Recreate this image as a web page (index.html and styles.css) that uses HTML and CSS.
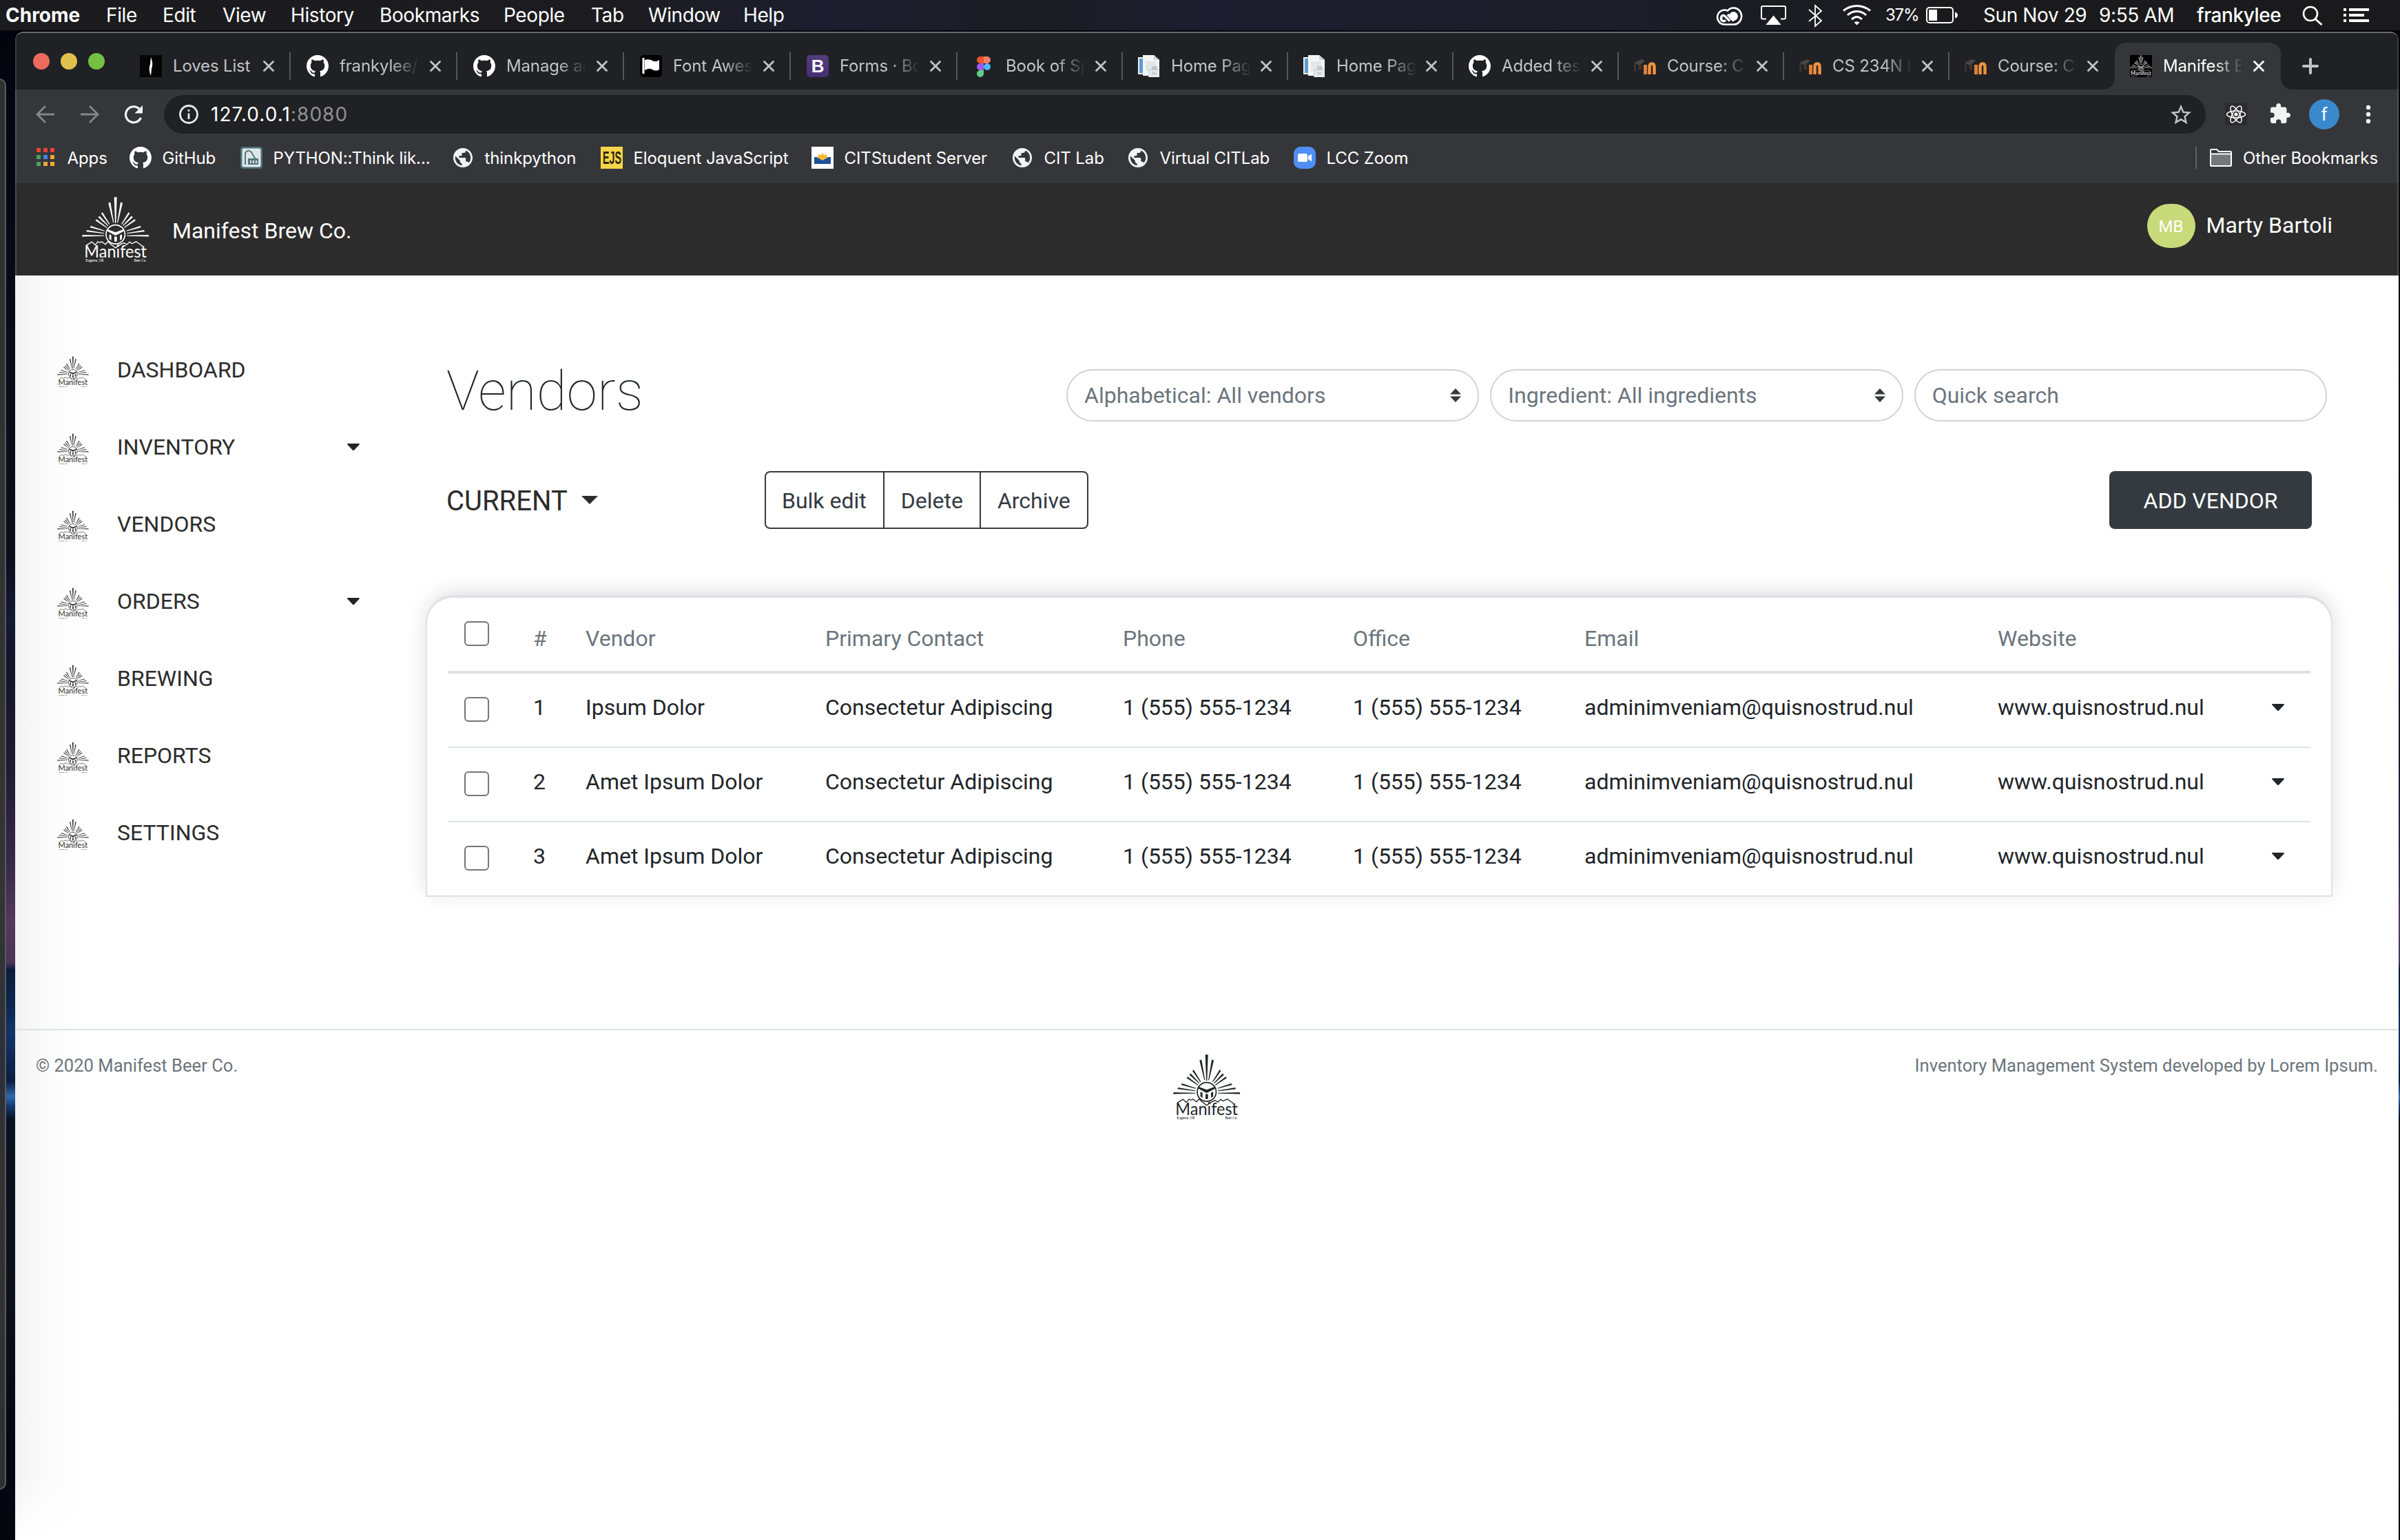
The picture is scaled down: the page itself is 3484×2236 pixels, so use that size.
FILE: index.html
```
<!DOCTYPE html>
<html lang="en">
<head>
<meta charset="utf-8">
<title>Manifest Brew Co.</title>
<link rel="stylesheet" href="styles.css">
</head>
<body>
<svg class="defs" aria-hidden="true">
  <symbol id="logo" viewBox="70 152 292 284">
    <g fill="currentColor">
      <path d="M209 152h12l-4 112h-4zM184 177l9-4 15 89-3 1zM246 177l-9-4-15 89 3 1zM153 222l6-5 31 51-3 2zM277 222l-6-5-31 51 3 2zM140 239l6-6 38 42-2 2zM290 239l-6-6-38 42 2 2zM128 253l5-6 46 36-2 2zM302 253l-5-6-46 36 2 2zM105 283l3-7 60 20-1 3zM325 283l-3-7-60 20 1 3zM89 301l2-7 75 13v3zM341 301l-2-7-75 13v3zM70 322l2-7 94 2v3zM360 322l-2-7-94 2v3z"/>
      <path d="M180 290l35 14 36-14v9l-36 19-35-19zM188 312l9 5v22l-9-6zM210 322h11v22h-11zM243 312l-9 5v22l9-6z"/>
    </g>
    <circle cx="215" cy="313" r="41" fill="none" stroke="currentColor" stroke-width="5"/>
    <path d="M89 360l24-15 14 14 12-15 8 5 8-5 16 12 12-12 12 12 20 15 24-16 13-5 12 7 12-12 10 8 18-9 26 18v6" fill="none" stroke="currentColor" stroke-width="4"/>
    <text x="80" y="413" textLength="270" lengthAdjust="spacingAndGlyphs" class="logo-name">Manifest</text>
    <text x="86" y="431" textLength="78" lengthAdjust="spacingAndGlyphs" class="logo-sub">Eugene, OR</text>
    <text x="295" y="431" textLength="53" lengthAdjust="spacingAndGlyphs" class="logo-sub">Beer Co.</text>
  </symbol>
  <symbol id="github" viewBox="0 0 16 16"><path fill="#fff" d="M8 0C3.58 0 0 3.58 0 8c0 3.54 2.29 6.53 5.47 7.59.4.07.55-.17.55-.38 0-.19-.01-.82-.01-1.49-2.01.37-2.53-.49-2.69-.94-.09-.23-.48-.94-.82-1.13-.28-.15-.68-.52-.01-.53.63-.01 1.08.58 1.23.82.72 1.21 1.87.87 2.33.66.07-.52.28-.87.51-1.07-1.78-.2-3.64-.89-3.64-3.95 0-.87.31-1.59.82-2.15-.08-.2-.36-1.02.08-2.12 0 0 .67-.21 2.2.82.64-.18 1.32-.27 2-.27.68 0 1.36.09 2 .27 1.53-1.04 2.2-.82 2.2-.82.44 1.1.16 1.92.08 2.12.51.56.82 1.27.82 2.15 0 3.07-1.87 3.75-3.65 3.95.29.25.54.73.54 1.48 0 1.07-.01 1.93-.01 2.2 0 .21.15.46.55.38A8.013 8.013 0 0016 8c0-4.42-3.58-8-8-8z"/></symbol>
  <symbol id="globe" viewBox="0.6 0.6 22.8 22.8"><path fill="#f1f3f4" d="M12 2C6.48 2 2 6.48 2 12s4.48 10 10 10 10-4.48 10-10S17.52 2 12 2zm-1 17.93c-3.95-.49-7-3.85-7-7.93 0-.62.08-1.21.21-1.79L9 15v1c0 1.1.9 2 2 2v1.93zm6.9-2.54c-.26-.81-1-1.39-1.9-1.39h-1v-3c0-.55-.45-1-1-1H8v-2h2c.55 0 1-.45 1-1V7h2c1.1 0 2-.9 2-2v-.41c2.93 1.19 5 4.06 5 7.41 0 2.08-.8 3.97-2.1 5.39z"/></symbol>
  <symbol id="close" viewBox="0 0 16 16"><path d="M1.5 1.5l13 13M14.500 1.500l-13 13" fill="none" stroke="currentColor" stroke-width="2.8" stroke-linecap="round"/></symbol>
  <symbol id="doc" viewBox="0 0 32 32"><path d="M0 3h8v25H0z" fill="#e8edf2"/><path d="M2 5h6v21H2z" fill="#5b9bd0"/><path d="M7 0h16l8 7v23H7z" fill="#f4f5f6"/><path d="M11 9h15v14H11z" fill="#e3e6e9"/><path d="M23 0v7h8z" fill="#cdd1d5"/><path d="M15 21h16v11H15z" fill="#e9ebee"/><path d="M15 21h16v1H15zM15 21h1v11h-1zM20 16h8v5h-8z" fill="#c3c8cd"/><path d="M20 24h7v5h-7z" fill="#d0d5da"/></symbol>
  <symbol id="moodle" viewBox="0 0 32 32"><path d="M0 11L11 6l5 2-8 7z" fill="#4b4643"/><path d="M1.500 12v12" stroke="#453c38" stroke-width="2"/><path d="M7 14h4v7H7z" fill="#47352b"/><path d="M16.500 28V14" stroke="#e07f38" stroke-width="5"/><path d="M22.500 28V17q0-4.500 3.500-4.500t3.500 4.500v11" fill="none" stroke="#f0913d" stroke-width="4.500"/></symbol>
  <symbol id="caret" viewBox="0 0 18 10"><path d="M1 0h16q1.500.3.500 1.700L10.200 9.400q-1.200 1-2.400 0L.5 1.700Q-.5.3 1 0z" fill="#212529"/></symbol>
  <symbol id="sort" viewBox="0 0 16 20"><path d="M0 8.500L8 0l8 8.500zM0 11.500L8 20l8-8.500z" fill="#343a40"/></symbol>
</svg>

<div class="desktop">
  <header class="menubar">
    <nav class="menus">
      <b>Chrome</b><span>File</span><span>Edit</span><span>View</span><span>History</span><span>Bookmarks</span><span>People</span><span>Tab</span><span>Window</span><span>Help</span>
    </nav>
    <div class="status">
      <svg width="40" height="44" fill="none" stroke="#fff"><path d="M14 35.500h13a11.500 12 0 1 0-9-20A10.500 10.500 0 1 0 14 35.500z" stroke-width="2.600"/><path d="M21 30.500l-7-7q-3-2.500-5 .5-1.500 4 1 6 2.500 1.500 5-.5" stroke-width="3.500"/><path d="M18 21l9 9.500" stroke-width="3.500"/><circle cx="26.500" cy="23.500" r="6.500" fill="#fff" stroke="none"/></svg>
      <svg width="40" height="44"><path d="M8 27.500H3q-2 0-2-2V11q0-2 2-2h31q2 0 2 2v14.500q0 2-2 2h-5" fill="none" stroke="#fff" stroke-width="2"/><path d="M18.500 22.500L29.500 36h-22z" fill="#fff"/></svg>
      <svg width="24" height="44"><path d="M2 14l18 16-9 8V8l9 8L2 31" fill="none" stroke="#fff" stroke-width="1.800"/></svg>
      <svg width="44" height="44" fill="none" stroke="#fff" stroke-width="3"><path d="M2 15.500Q11 8.500 21.500 8.500T41 15.500M8 22q6-5.500 13.500-5.500T35 22M14 28q4-3.500 7.500-3.500T29 28"/><path d="M17.500 32.500q4-2.500 8 0l-4 4z" fill="#fff" stroke="none"/></svg>
      <span class="percent">37%</span>
      <svg width="48" height="44"><rect x="1" y="11" width="38" height="22" rx="4" fill="none" stroke="#fff" stroke-width="2"/><path d="M4 14h12v16H4zM42 17.500q4 1 4 4.500t-4 4.500z" fill="#fff"/></svg>
      <span>Sun Nov 29</span><span>9:55 AM</span><span class="user">frankylee</span>
      <svg width="32" height="44" fill="none" stroke="#fff" stroke-width="2.600"><circle cx="12" cy="20" r="10"/><path d="M19 27.500l9.500 8.500" stroke-width="3"/></svg>
      <svg width="40" height="44" fill="#fff"><path d="M0 12h4v4H0zM8 12h29v4H8zM0 20h4v4H0zM8 20h22v4H8zM0 28h4v4H0zM8 28h29v4H8z"/></svg>
    </div>
  </header>

  <div class="stage">
    <div class="window-behind"></div>
    <div class="browser">
      <div class="tabstrip">
        <div class="lights"><i class="red"></i><i class="yellow"></i><i class="green"></i></div>
        <div class="tab wide"><svg viewBox="0 0 32 32"><path fill="#050505" d="M0 0h32v32H0z"/><path d="M16 3q4 9 1 17l-1 10q-4-9-1-17z" fill="#fff"/></svg><span>Loves List</span><svg class="x"><use href="#close"/></svg></div>
        <div class="tab wide"><svg><use href="#github"/></svg><span>frankylee/</span><svg class="x"><use href="#close"/></svg></div>
        <div class="tab wide"><svg><use href="#github"/></svg><span>Manage ac</span><svg class="x"><use href="#close"/></svg></div>
        <div class="tab wide"><svg viewBox="0 0 32 32"><rect width="32" height="32" rx="5" fill="#000"/><path d="M5 4v23" stroke="#fff" stroke-width="3"/><path d="M7 7q6-2 11 1t10-1v14q-5 3-10 0t-11 1z" fill="#fff"/></svg><span>Font Awes</span><svg class="x"><use href="#close"/></svg></div>
        <div class="tab wide"><span class="fav-b">B</span><span>Forms · Bo</span><svg class="x"><use href="#close"/></svg></div>
        <div class="tab"><svg viewBox="0 0 32 32"><path d="M16 2h-5a5 5 0 0 0 0 10h5z" fill="#e8572c"/><path d="M16 2h5a5 5 0 0 1 0 10h-5z" fill="#f37c6b"/><path d="M16 12h-5a5 5 0 0 0 0 10h5z" fill="#9b5cf6"/><circle cx="21" cy="17" r="5" fill="#4fb6f8"/><path d="M16 22h-5a5 5 0 1 0 5 5z" fill="#5fcf86"/></svg><span>Book of Sp</span><svg class="x"><use href="#close"/></svg></div>
        <div class="tab"><svg><use href="#doc"/></svg><span>Home Pag</span><svg class="x"><use href="#close"/></svg></div>
        <div class="tab"><svg><use href="#doc"/></svg><span>Home Pag</span><svg class="x"><use href="#close"/></svg></div>
        <div class="tab"><svg><use href="#github"/></svg><span>Added tes</span><svg class="x"><use href="#close"/></svg></div>
        <div class="tab"><svg><use href="#moodle"/></svg><span>Course: C</span><svg class="x"><use href="#close"/></svg></div>
        <div class="tab"><svg><use href="#moodle"/></svg><span>CS 234N I</span><svg class="x"><use href="#close"/></svg></div>
        <div class="tab before-active"><svg><use href="#moodle"/></svg><span>Course: C</span><svg class="x"><use href="#close"/></svg></div>
        <div class="tab active"><svg class="fav-logo"><use href="#logo"/></svg><span>Manifest B</span><svg class="x"><use href="#close"/></svg></div>
        <svg class="new-tab" viewBox="0 0 24 24"><path d="M12 2v20M2 12h20" stroke="#c1c2c6" stroke-width="4" stroke-linecap="round"/></svg>
      </div>

      <div class="toolbar">
        <svg class="nav" viewBox="0 0 28 28"><path d="M27 14H2M14 2L2 14l12 12" fill="none" stroke="#85868a" stroke-width="2.800"/></svg>
        <svg class="nav" viewBox="0 0 28 28"><path d="M1 14h25M14 2l12 12-12 12" fill="none" stroke="#85868a" stroke-width="2.800"/></svg>
        <svg class="nav" viewBox="0 0 28 28"><path d="M24.500 19A11.500 11.500 0 1 1 22 6" fill="none" stroke="#f1f3f4" stroke-width="3.200"/><path d="M27 1v11.500H15.500z" fill="#f1f3f4"/></svg>
        <div class="omnibox">
          <svg class="info" viewBox="0 0 28 28"><circle cx="14" cy="14" r="12.500" fill="none" stroke="#e8eaed" stroke-width="2.800"/><path d="M12.600 7h2.800v2.800h-2.800zM12.600 12.500h2.800V21h-2.800z" fill="#e8eaed"/></svg>
          <span class="url">127.0.0.1<em>:8080</em></span>
          <svg class="star" viewBox="1.500 1.500 21 20"><path fill="#c4c5c8" d="M22 9.240l-7.190-.62L12 2 9.190 8.630 2 9.240l5.460 4.730L5.820 21 12 17.270 18.180 21l-1.630-7.030L22 9.240zM12 15.400l-3.760 2.270 1-4.280-3.320-2.880 4.380-.38L12 6.100l1.710 4.040 4.380.38-3.320 2.880 1 4.280L12 15.400z"/></svg>
        </div>
        <svg class="react" viewBox="0 0 32 32"><rect width="32" height="32" rx="3" fill="#2b2b2e"/><circle cx="16" cy="16" r="2.600" fill="#fff"/><g fill="none" stroke="#fff" stroke-width="1.500"><ellipse cx="16" cy="16" rx="13.500" ry="5"/><ellipse cx="16" cy="16" rx="13.500" ry="5" transform="rotate(60 16 16)"/><ellipse cx="16" cy="16" rx="13.500" ry="5" transform="rotate(120 16 16)"/></g></svg>
        <svg class="puzzle" viewBox="2 1 21 21"><path fill="#f1f3f4" d="M20.500 11H19V7c0-1.100-.9-2-2-2h-4V3.500C13 2.120 11.880 1 10.500 1S8 2.120 8 3.500V5H4c-1.100 0-1.990.9-1.990 2v3.800H3.500c1.490 0 2.700 1.210 2.700 2.700s-1.210 2.700-2.700 2.700H2V20c0 1.100.9 2 2 2h3.800v-1.500c0-1.490 1.210-2.700 2.700-2.700s2.700 1.210 2.700 2.700V22H17c1.100 0 2-.9 2-2v-4h1.500c1.380 0 2.500-1.120 2.500-2.500S21.880 11 20.500 11z"/></svg>
        <span class="profile">f</span>
        <svg class="dots" viewBox="0 0 8 28"><g fill="#f1f3f4"><circle cx="4" cy="4" r="3.200"/><circle cx="4" cy="14" r="3.200"/><circle cx="4" cy="24" r="3.200"/></g></svg>
      </div>

      <div class="bookmarks">
        <a><svg viewBox="0 0 32 32"><path d="M3 2h6v6H3zM13 2h6v6h-6zM23 2h6v6h-6z" fill="#ea4335"/><path d="M3 12h6v6H3zM3 22h6v6H3z" fill="#4aa35c"/><path d="M13 12h6v6h-6z" fill="#4285f4"/><path d="M23 12h6v6h-6zM13 22h6v6h-6zM23 22h6v6h-6z" fill="#f0a830"/></svg>Apps</a>
        <a><svg><use href="#github"/></svg>GitHub</a>
        <a><svg viewBox="0 0 32 32"><rect x="1" y="1" width="30" height="30" rx="4" fill="#dfe6e7" stroke="#4b7077" stroke-width="3"/><path d="M7 26V9q4-6 9-1l7 12" fill="none" stroke="#56757b" stroke-width="2"/><path d="M11 17h15v9H11z" fill="#54757c"/><path d="M14 20h2v4h-2zM18 20h2v4h-2zM22 20h2v4h-2z" fill="#dfe6e7"/></svg>PYTHON::Think lik...</a>
        <a><svg><use href="#globe"/></svg>thinkpython</a>
        <a><svg viewBox="0 0 32 32"><path fill="#f7d548" d="M0 0h32v32H0z"/><text x="3" y="25" textLength="27" lengthAdjust="spacingAndGlyphs" class="ejs">EJS</text></svg>Eloquent JavaScript</a>
        <a><svg viewBox="0 0 32 32"><path fill="#fff" d="M0 0h32v32H0z"/><path d="M4 15h8l4 4 4-4h8v10H4z" fill="#1c519c"/><path d="M16 9l2 3 4-1 0 3 3 1-9 5-9-5 3-1 0-3 4 1z" fill="#f6b73c"/></svg>CITStudent Server</a>
        <a><svg><use href="#globe"/></svg>CIT Lab</a>
        <a><svg><use href="#globe"/></svg>Virtual CITLab</a>
        <a><svg viewBox="0 0 32 32"><rect width="32" height="32" rx="10" fill="#4f8ff7"/><rect x="6" y="10" width="14" height="12" rx="2.500" fill="#fff"/><path d="M21 14l5-3.500v11L21 18z" fill="#fff"/></svg>LCC Zoom</a>
        <a class="other"><svg viewBox="0 0 32 32"><path d="M1 9V5q0-1 1-1h8l3 3h17q1 0 1 1v19q0 1-1 1H2q-1 0-1-1z" fill="#35363a" stroke="#fff" stroke-width="2"/><path d="M2 11h28v16H2z" fill="#76777a"/><path d="M1 10.500h30" stroke="#fff" stroke-width="2"/></svg>Other Bookmarks</a>
      </div>

      <div class="page">
        <header class="site-header">
          <div class="brand"><svg class="logo"><use href="#logo"/></svg><span>Manifest Brew Co.</span></div>
          <div class="account"><span class="avatar">MB</span><span class="name">Marty Bartoli</span></div>
        </header>
        <div class="columns">
          <nav class="sidebar">
            <a><svg class="logo-small"><use href="#logo"/></svg><span>DASHBOARD</span></a>
            <a><svg class="logo-small"><use href="#logo"/></svg><span>INVENTORY</span><svg class="caret"><use href="#caret"/></svg></a>
            <a><svg class="logo-small"><use href="#logo"/></svg><span>VENDORS</span></a>
            <a><svg class="logo-small"><use href="#logo"/></svg><span>ORDERS</span><svg class="caret"><use href="#caret"/></svg></a>
            <a><svg class="logo-small"><use href="#logo"/></svg><span>BREWING</span></a>
            <a><svg class="logo-small"><use href="#logo"/></svg><span>REPORTS</span></a>
            <a><svg class="logo-small"><use href="#logo"/></svg><span>SETTINGS</span></a>
          </nav>
          <main>
            <div class="title-row">
              <h1>Vendors</h1>
              <div class="filters">
                <div class="field">Alphabetical: All vendors<svg class="sort"><use href="#sort"/></svg></div>
                <div class="field">Ingredient: All ingredients<svg class="sort"><use href="#sort"/></svg></div>
                <div class="field">Quick search</div>
              </div>
            </div>
            <div class="action-row">
              <div class="current"><span>CURRENT</span><svg class="caret-big" viewBox="0 0 24 12"><path d="M0 0h24L12 12z" fill="#2c2c2c"/></svg></div>
              <div class="group"><button>Bulk edit</button><button>Delete</button><button>Archive</button></div>
              <button class="add">ADD VENDOR</button>
            </div>
            <section class="card">
              <div class="row head"><i class="check"></i><span>#</span><span>Vendor</span><span>Primary Contact</span><span>Phone</span><span>Office</span><span>Email</span><span>Website</span></div>
              <div class="row"><i class="check"></i><span>1</span><span>Ipsum Dolor</span><span>Consectetur Adipiscing</span><span>1 (555) 555-1234</span><span>1 (555) 555-1234</span><span>adminimveniam@quisnostrud.nul</span><span>www.quisnostrud.nul</span><svg class="caret"><use href="#caret"/></svg></div>
              <div class="row"><i class="check"></i><span>2</span><span>Amet Ipsum Dolor</span><span>Consectetur Adipiscing</span><span>1 (555) 555-1234</span><span>1 (555) 555-1234</span><span>adminimveniam@quisnostrud.nul</span><span>www.quisnostrud.nul</span><svg class="caret"><use href="#caret"/></svg></div>
              <div class="row"><i class="check"></i><span>3</span><span>Amet Ipsum Dolor</span><span>Consectetur Adipiscing</span><span>1 (555) 555-1234</span><span>1 (555) 555-1234</span><span>adminimveniam@quisnostrud.nul</span><span>www.quisnostrud.nul</span><svg class="caret"><use href="#caret"/></svg></div>
            </section>
          </main>
        </div>
        <footer>
          <small>© 2020 Manifest Beer Co.</small>
          <svg class="logo"><use href="#logo"/></svg>
          <small class="credit">Inventory Management System developed by Lorem Ipsum.</small>
        </footer>
      </div>
    </div>
  </div>
</div>
</body>
</html>
```
FILE: styles.css
```
* { box-sizing: border-box; }
body { margin: 0; background: #02040c; }
svg { display: block; flex: none; }
symbol { overflow: visible; }
.defs { position: absolute; width: 0; height: 0; }

.desktop {
  width: 3484px;
  height: 2236px;
  overflow: hidden;
  display: flex;
  flex-direction: column;
  font-family: Inter, "Liberation Sans", sans-serif;
  color: #fff;
  background: linear-gradient(to bottom, #02040c 0, #060a18 380px, #0d0d1a 800px, #121a36 900px, #14132a 960px, #1e1a30 1100px, #35284a 1250px, #55385f 1340px, #4a3557 1398px, #0a1c3c 1408px, #0d2750 1460px, #123468 1500px, #0b1e40 1570px, #2d68ac 1592px, #123a70 1606px, #08121f 1625px, #0d121b 1850px, #020812 2100px, #02060f 2236px);
}

/* Menu bar */
.menubar {
  flex: none;
  height: 44px;
  display: flex;
  justify-content: space-between;
  font-size: 28px;
  letter-spacing: -0.4px;
  background: linear-gradient(to right, #1b1b1e 0, #1c1c20 900px, #1c1e2f 1200px, #1b1c22 1500px, #1c1e2f 1750px, #1c1d28 2300px, #1a1a1c 2900px);
}
.menus, .status { display: grid; align-items: center; line-height: 44px; white-space: nowrap; }
.menus { padding-left: 8px; grid-template-columns: 146px 82px 87px 99px 129px 180px 127px 83px 138px auto; }
.menus b { letter-spacing: 0; }
.status { width: 994px; grid-template-columns: 66px 68px 50px 63px 59px 83px 168px 142px 153px 60px auto; }
.percent { font-size: 24px; letter-spacing: -1.2px; }
.user { font-weight: 500; }

/* Windows */
.stage { position: relative; flex: 1; min-height: 0; padding: 2px 2px 0 22px; }
.window-behind {
  position: absolute;
  left: -20px;
  top: 70px;
  width: 29px;
  height: 2049px;
  border: 2px solid #5a5a5c;
  border-radius: 10px;
  background: linear-gradient(#2f3030, #343436 60%, #2b303b 70%, #343232 78%, #2d302f);
}
.browser {
  height: 2190px;
  display: flex;
  flex-direction: column;
  border-top: 2px solid #6b6c6d;
  border-radius: 12px 12px 0 0;
  overflow: hidden;
  background: #202124;
}

/* Tab strip */
.tabstrip { flex: none; height: 82px; display: flex; align-items: center; padding-top: 14px; background: #202124; border-left: 2px solid #3b3c3e; border-right: 2px solid #3b3c3e; }
.lights { width: 156px; padding: 0 0 14px 24px; display: flex; gap: 16px; }
.lights i { width: 24px; height: 24px; border-radius: 50%; }
.red { background: #ec6a5e; }
.yellow { background: #e0c04c; }
.green { background: #74bf44; }
.tab {
  width: 240px;
  height: 40px;
  padding: 0 22px;
  border-right: 2px solid #56575a;
  display: flex;
  align-items: center;
  font-size: 24px;
  letter-spacing: -0.15px;
  color: #c2c4c8;
}
.tab.wide { width: 242px; padding-left: 23px; }
.tab > svg { width: 32px; height: 32px; }
.tab > span:not(.fav-b) {
  width: 114px;
  margin-left: 16px;
  line-height: 32px;
  white-space: nowrap;
  overflow: hidden;
  -webkit-mask-image: linear-gradient(to right, #000 74px, transparent 116px);
  mask-image: linear-gradient(to right, #000 74px, transparent 116px);
}
.tab:nth-child(2) > span:not(.fav-b) { width: 116px; -webkit-mask-image: none; mask-image: none; }
.tab > svg.x { width: 16px; height: 16px; margin-left: auto; }
.fav-b { width: 32px; height: 32px; border-radius: 5px; background: linear-gradient(#563d7c, #452e73); color: #fff; font: 700 26px/32px "Liberation Sans", sans-serif; text-align: center; }
.before-active { border-color: transparent; }
.tab.active {
  position: relative;
  align-self: stretch;
  width: 241px;
  height: 68px;
  padding-right: 24px;
  border: 0;
  border-radius: 16px 16px 0 0;
  background: #35363a;
  color: #fff;
}
.tab.active::before, .tab.active::after { content: ""; position: absolute; bottom: 0; width: 16px; height: 16px; }
.tab.active::before { left: -16px; background: radial-gradient(circle at 0 0, transparent 15.5px, #35363a 16px); }
.tab.active::after { right: -16px; background: radial-gradient(circle at 100% 0, transparent 15.5px, #35363a 16px); }
.tab .fav-logo { background: #000; }
.new-tab { width: 24px; height: 24px; margin-left: 31px; }

/* Toolbar */
.toolbar { flex: none; height: 72px; display: flex; align-items: center; padding: 0 38px 0 28px; background: #35363a; border-left: 2px solid #545557; border-right: 2px solid #545557; }
.nav { width: 28px; height: 28px; margin-right: 36px; }
.nav + .nav { margin-right: 36px; }
.nav + .nav + .nav { margin-right: 30px; }
.omnibox { flex: 1; height: 56px; border-radius: 28px; background: #202124; display: flex; align-items: center; padding: 0 20px 0 22px; font-size: 28px; letter-spacing: 1.05px; }
.info { width: 28px; height: 28px; }
.url { flex: 1; margin-left: 18px; }
.url em { font-style: normal; color: #8f9094; }
.star { width: 32px; height: 30px; }
.react { width: 32px; height: 32px; margin-left: 28px; }
.puzzle { width: 29px; height: 29px; margin: -3px 0 0 34px; }
.profile { width: 44px; height: 44px; margin-left: 27px; border-radius: 50%; background: #3a89cc; font: 400 26px/44px Roboto, sans-serif; text-align: center; }
.dots { width: 8px; height: 28px; margin-left: 38px; }

/* Bookmarks bar */
.bookmarks {
  flex: none;
  height: 66px;
  padding: 9px 0 14px 26px;
  display: grid;
  grid-template-columns: 138px 161px 307px 216px 306px 290px 168px 242px 1fr auto;
  background: #35363a;
  border-left: 2px solid #545557;
  border-right: 2px solid #545557;
  border-bottom: 2px solid #2a2a2b;
  font-size: 24px;
  letter-spacing: -0.1px;
}
.bookmarks a { display: flex; align-items: center; gap: 15.5px; height: 32px; white-space: nowrap; margin-top: 2px; }
.bookmarks svg { width: 32px; height: 32px; }
.ejs { font: 700 25px "Liberation Sans", sans-serif; letter-spacing: 0; fill: #2b2410; }
.other { border-left: 2px solid #5f6063; padding: 0 28px 0 19px; }

/* Page */
.page {
  flex: 1;
  position: relative;
  font: 400 32px/48px Roboto, sans-serif;
  color: #212529;
  background:
    linear-gradient(to top, #fff 0, rgba(255,255,255,0) 100px),
    linear-gradient(to right, #f1f1f1 0, #f7f7f7 20px, #fbfbfb 45px, #fefefe 85px, #fff 100px),
    #fff;
}
.site-header {
  height: 132px;
  display: flex;
  justify-content: space-between;
  padding: 0 94px 0 95px;
  background: #2c2c2c;
  color: #fff;
  border-left: 2px solid #4c4c4c;
  border-right: 2px solid #4c4c4c;
}
.brand { display: flex; align-items: center; gap: 33px; }
.brand span { margin-top: 2px; }
.logo { width: 98px; height: 96px; }
.logo-name { font: 400 76px Lato, sans-serif; letter-spacing: 0; fill: currentColor; }
.logo-sub { font: 400 16px Lato, sans-serif; letter-spacing: 0; fill: currentColor; }
.account { display: flex; align-items: center; gap: 16px; height: 64px; margin-top: 28px; }
.account .name { margin-top: -2px; }
.avatar { width: 70px; height: 64px; border-radius: 32px; background: #c8da79; font-size: 24px; line-height: 66px; text-align: center; }
.columns { display: flex; }
.sidebar { width: 596px; padding: 81px 0 0 61px; color: #2c2c2c; }
.sidebar a { height: 112px; display: flex; align-items: center; }
.sidebar span { width: 334px; margin: -1px 0 0 41px; }
.logo-small { width: 46px; height: 46px; margin-top: 6px; }
.caret { width: 18px; height: 10px; }
main { width: 2768px; padding-top: 136px; }
.title-row { display: flex; justify-content: space-between; height: 76px; padding: 0 8px 0 30px; }
h1 { margin: -8px 0 0; font-size: 80px; line-height: 80px; font-weight: 100; letter-spacing: 0.2px; }
.filters { width: 1830px; display: grid; grid-template-columns: repeat(3, 1fr); gap: 16px; }
.field { height: 76px; display: flex; align-items: center; justify-content: space-between; border: 2px solid #ced4da; border-radius: 38px; padding: 0 24px; background: #fff; color: #6c757d; }
.sort { width: 16px; height: 20px; }
.action-row { display: flex; height: 84px; margin-top: 72px; padding: 0 30px; }
.current { width: 462px; display: flex; align-items: center; gap: 20px; font-size: 40px; line-height: 60px; color: #2c2c2c; }
.current span { margin-top: 4px; }
.caret-big { width: 24px; height: 12px; }
button { font: 400 32px/48px Roboto, sans-serif; margin: 0; }
.group { display: flex; }
.group button { border: 2px solid #343a40; background: #fff; color: #343a40; padding: 1px 24px 0 23px; }
.group button + button { border-left: 0; padding-left: 24px; }
.group button:first-child { border-radius: 8px 0 0 8px; }
.group button:last-child { border-radius: 0 8px 8px 0; }
.add { margin-left: auto; width: 294px; border: 0; border-radius: 8px; background: #343a40; color: #fff; padding: 1px 0 0; }
.card {
  margin-top: 96px;
  height: 438px;
  padding: 0 30px;
  border: 2px solid #dee2e6;
  border-top-width: 4px;
  border-radius: 40px 40px 0 0;
  background: #fff;
  box-shadow: 0 -5px 32px -3px rgba(0, 0, 0, .15);
}
.row {
  height: 108px;
  border-top: 2px solid #dee2e6;
  display: grid;
  grid-template-columns: 124px 76px 348px 432px 334px 336px 600px 398px auto;
  align-items: center;
  justify-content: start;
  white-space: nowrap;
}
.row span { margin-top: -8px; }
.row .caret { margin-top: -8px; }
.check { width: 36px; height: 36px; margin: -2px 0 0 24px; border: 2px solid #767676; border-radius: 6px; background: #fff; }
.row.head { height: 106px; border-top: 0; color: #6c757d; }
.row.head span { margin-top: 12px; }
.head + .row { height: 110px; border-top-width: 4px; }
footer {
  margin-top: 192px;
  padding: 35px 30px 0;
  border-top: 2px solid #dee2e6;
  display: grid;
  grid-template-columns: 1fr auto 1fr;
  color: #6c757d;
}
footer small { font-size: 25.6px; line-height: 38px; margin-top: -3px; }
footer .logo { color: #212529; }
.credit { text-align: right; }
```
